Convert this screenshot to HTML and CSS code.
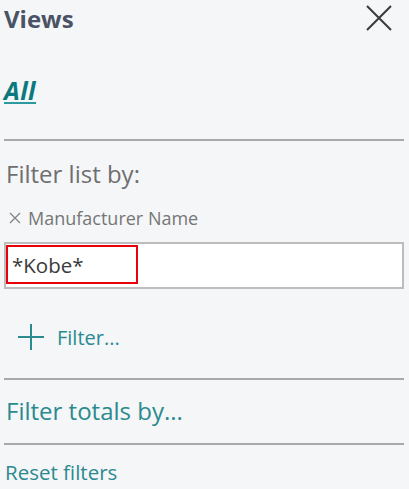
FILE: index.html
```html
<!DOCTYPE html>
<html>
<head>
<meta charset="utf-8">
<link rel="stylesheet" href="styles.css">
</head>
<body>
<div class="panel">
  <div class="header">
    <span class="title">Views</span>
    <svg class="close" width="26" height="26" viewBox="0 0 26 26"><path d="M1 1 L25 25 M25 1 L1 25" stroke="#3a3a3a" stroke-width="2" fill="none"/></svg>
  </div>
  <div class="all">All</div>
  <hr class="sep sep1">
  <div class="filter-by">Filter list by:</div>
  <div class="field-label"><svg class="x" width="12" height="12" viewBox="0 0 12 12"><path d="M1 1 L11 11 M11 1 L1 11" stroke="#808080" stroke-width="1.2" fill="none"/></svg><span>Manufacturer Name</span></div>
  <div class="input"><span class="mark">*Kobe*</span></div>
  <div class="add-filter">
    <svg class="plus" width="26" height="26" viewBox="0 0 26 26"><path d="M13 0 V26 M0 13 H26" stroke="#2a8a8f" stroke-width="2" fill="none"/></svg>
    <span>Filter...</span>
  </div>
  <hr class="sep sep2">
  <div class="totals">Filter totals by...</div>
  <hr class="sep sep3">
  <div class="reset">Reset filters</div>
</div>
</body>
</html>
```
FILE: styles.css
```css
html, body {
  margin: 0;
  padding: 0;
  background: #f5f6f8;
}
body {
  font-family: "Open Sans", "Noto Sans", sans-serif;
  width: 409px;
  height: 489px;
  overflow: hidden;
}
.panel {
  padding: 0 5px 0 4px;
}
.header {
  display: flex;
  justify-content: space-between;
  align-items: flex-start;
  height: 40px;
}
.title {
  font-weight: 700;
  font-size: 24px;
  line-height: 38px;
  color: #4a5365;
}
.close {
  margin-top: 5px;
  margin-right: 12px;
}
.all {
  margin-top: 35px;
  font-size: 25px;
  font-weight: 700;
  font-style: italic;
  line-height: 30px;
  color: #0b7a7e;
  text-decoration: underline;
  text-decoration-color: #2a9a9e;
  text-decoration-thickness: 2px;
  text-underline-offset: 2px;
  letter-spacing: 0.5px;
  height: 30px;
}
.sep {
  border: 0;
  height: 2px;
  background: #a9a9a9;
  margin: 0;
}
.sep1 { margin-top: 34px; }
.filter-by {
  margin-top: 18px;
  font-size: 24px;
  line-height: 30px;
  color: #6f6f6f;
  padding-left: 2px;
}
.field-label {
  margin-top: 17px;
  font-size: 18px;
  line-height: 24px;
  color: #767676;
  padding-left: 5px;
  display: flex;
  align-items: center;
  gap: 7px;
}
.input {
  margin-top: 12px;
  height: 42px;
  border: 2px solid #bdbdbd;
  background: #ffffff;
  padding: 1px 0 0 0;
}
.mark {
  display: block;
  width: 124px;
  height: 34px;
  border: 2px solid #e8000b;
  padding: 1px 0 0 4px;
  box-sizing: content-box;
  font-size: 20.5px;
  line-height: 34px;
  color: #3a3a3a;
}
.add-filter {
  margin-top: 28px;
  height: 40px;
  display: flex;
  align-items: center;
  padding-left: 14px;
  gap: 13px;
  color: #2a8a8f;
  font-size: 20px;
}
.sep2 { margin-top: 21px; }
.totals {
  margin-top: 16px;
  font-size: 24px;
  line-height: 30px;
  color: #2a8a8f;
  padding-left: 2px;
}
.sep3 { margin-top: 17px; }
.reset {
  margin-top: 14px;
  font-size: 20.5px;
  line-height: 26px;
  color: #2a8a8f;
  padding-left: 1px;
}
```
